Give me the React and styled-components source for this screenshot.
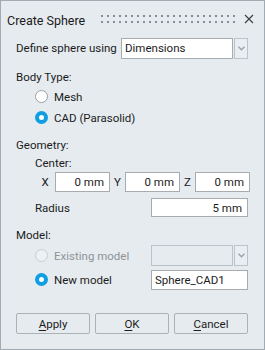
import styled, { createGlobalStyle } from 'styled-components';

const GlobalStyle = createGlobalStyle`
  html, body {
    margin: 0;
    padding: 0;
    background: #ffffff;
  }
  * {
    box-sizing: border-box;
  }
`;

const Window = styled.div`
  width: 265px;
  height: 350px;
  border: 1px solid #a3abb2;
  background-color: #e6ebef;
  font-family: Roboto, "Liberation Sans", sans-serif;
  font-size: 11.5px;
  color: #1c1c1c;
  display: flex;
  flex-direction: column;
`;

const TitleBar = styled.div`
  height: 28px;
  margin-top: 5px;
  display: flex;
  flex-direction: row;
  align-items: center;
  padding: 0 10px 0 6px;
`;

const Title = styled.span`
  font-size: 12.5px;
  color: #1a1a1a;
  width: 94px;
`;

const Grip = styled.svg`
  margin-top: -2px;
  display: block;
`;

const Close = styled.div`
  margin-left: auto;
  margin-top: -3px;
  width: 10px;
  height: 10px;
  display: flex;
`;

const Body = styled.div`
  display: flex;
  flex-direction: column;
  padding: 0 16px 0 15px;
`;

const Row = styled.div`
  display: flex;
  flex-direction: row;
  align-items: center;
  height: ${p => p.h || 20}px;
  margin-top: ${p => p.mt || 0}px;
  padding-left: ${p => p.indent || 0}px;
`;

const Label = styled.span`
  width: ${p => (p.w ? `${p.w}px` : 'auto')};
  color: ${p => (p.disabled ? '#8f9397' : 'inherit')};
  flex-shrink: 0;
`;

const Combo = styled.div`
  flex: 1;
  display: flex;
  flex-direction: row;
  gap: 1px;
  height: 21px;
`;

const ComboField = styled.div`
  flex: 1;
  border: 1px solid ${p => (p.disabled ? '#bcc2c7' : '#a7acb1')};
  background: ${p => (p.disabled ? '#e6ebef' : '#ffffff')};
  display: flex;
  align-items: center;
  padding-left: 3px;
`;

const ComboButton = styled.div`
  width: 14px;
  border: 1px solid #bcc2c7;
  background: #e9eef2;
  display: flex;
  align-items: center;
  justify-content: center;
`;

const Input = styled.div`
  width: ${p => (p.w ? `${p.w}px` : 'auto')};
  flex: ${p => (p.w ? '0 0 auto' : 1)};
  height: ${p => p.h || 20}px;
  border: 1px solid #a7acb1;
  background: #ffffff;
  display: flex;
  align-items: center;
  justify-content: ${p => (p.left ? 'flex-start' : 'flex-end')};
  padding: 0 5px 0 3px;
`;

const AxisLabel = styled.span`
  width: ${p => p.w}px;
  text-align: center;
  flex-shrink: 0;
`;

const RadioCircle = styled.span`
  width: 13px;
  height: 13px;
  border-radius: 50%;
  flex-shrink: 0;
  margin-right: 6px;
  border: ${p => (p.checked ? '4px solid #109ee3' : p.disabled ? '1px solid #c9cdd1' : '1px solid #9aa0a6')};
  background: ${p => (p.disabled ? '#eef1f3' : '#ffffff')};
`;

const Buttons = styled.div`
  display: grid;
  grid-template-columns: 1fr 1fr 1fr;
  gap: 5px;
  margin-top: 23px;
`;

const Button = styled.div`
  height: 21px;
  border: 1px solid #acb1b6;
  border-radius: 2px;
  background: #e6ebef;
  display: flex;
  align-items: center;
  justify-content: center;
  u {
    text-decoration: underline;
    text-underline-offset: 2px;
  }
`;

const Chevron = () => (
  <svg width="7" height="5" viewBox="0 0 7 5">
    <path d="M0.5 0.8 L3.5 3.8 L6.5 0.8" fill="none" stroke="#9ca2a8" strokeWidth="1.4" />
  </svg>
);

function Radio({ checked, disabled, children }) {
  return (
    <Row h={21} indent={19}>
      <RadioCircle checked={checked} disabled={disabled} />
      <Label disabled={disabled}>{children}</Label>
    </Row>
  );
}

export default function App() {
  return (
    <>
      <GlobalStyle />
      <Window>
        <TitleBar>
          <Title>Create Sphere</Title>
          <Grip width="136" height="8" viewBox="0 0 136 8">
            <defs>
              <pattern id="dots" width="6" height="6" patternUnits="userSpaceOnUse">
                <rect width="2" height="2" fill="#868c92" />
              </pattern>
            </defs>
            <rect width="136" height="8" fill="url(#dots)" />
          </Grip>
          <Close>
            <svg width="10" height="10" viewBox="0 0 10 10">
              <path d="M1 1 L9 9 M9 1 L1 9" stroke="#3c3c3c" strokeWidth="1.1" />
            </svg>
          </Close>
        </TitleBar>
        <Body>
          <Row h={22} mt={3}>
            <Label w={105}>Define sphere using</Label>
            <Combo>
              <ComboField>Dimensions</ComboField>
              <ComboButton><Chevron /></ComboButton>
            </Combo>
          </Row>

          <Row h={18} mt={9}>
            <Label>Body Type:</Label>
          </Row>
          <Radio>Mesh</Radio>
          <Radio checked>CAD (Parasolid)</Radio>

          <Row h={18} mt={8}>
            <Label>Geometry:</Label>
          </Row>
          <Row h={18} indent={19}>
            <Label>Center:</Label>
          </Row>
          <Row h={20} indent={19}>
            <AxisLabel w={20}>X</AxisLabel>
            <Input w={55}>0 mm</Input>
            <AxisLabel w={15}>Y</AxisLabel>
            <Input w={55}>0 mm</Input>
            <AxisLabel w={15}>Z</AxisLabel>
            <Input w={55}>0 mm</Input>
          </Row>
          <Row h={19} mt={6} indent={19}>
            <Label w={116}>Radius</Label>
            <Input h={19}>5 mm</Input>
          </Row>

          <Row h={18} mt={9}>
            <Label>Model:</Label>
          </Row>
          <Row h={21} mt={1} indent={19}>
            <RadioCircle disabled />
            <Label w={97} disabled>Existing model</Label>
            <Combo>
              <ComboField disabled />
              <ComboButton><Chevron /></ComboButton>
            </Combo>
          </Row>
          <Row h={21} mt={3} indent={19}>
            <RadioCircle checked />
            <Label w={97}>New model</Label>
            <Input left>Sphere_CAD1</Input>
          </Row>

          <Buttons>
            <Button><span><u>A</u>pply</span></Button>
            <Button><span><u>O</u>K</span></Button>
            <Button><span><u>C</u>ancel</span></Button>
          </Buttons>
        </Body>
      </Window>
    </>
  );
}
